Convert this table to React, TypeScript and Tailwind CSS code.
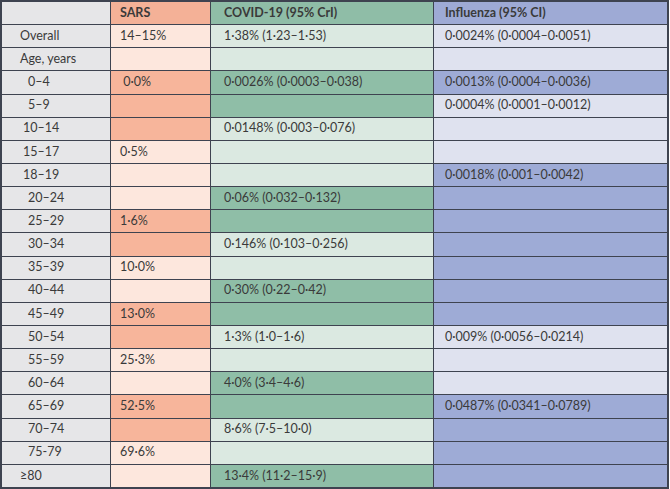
type Row = {
  label: string;
  pad: string;
  sars: string;
  sarsDark: boolean;
  covid: string;
  covidDark: boolean;
  flu: string;
  fluDark: boolean;
};

const rows: Row[] = [
  { label: 'Overall', pad: 'pl-[18px]', sars: '14–15%', sarsDark: false, covid: '1·38% (1·23–1·53)', covidDark: false, flu: '0·0024% (0·0004–0·0051)', fluDark: false },
  { label: 'Age, years', pad: 'pl-[18px]', sars: '', sarsDark: false, covid: '', covidDark: false, flu: '', fluDark: false },
  { label: '0–4', pad: 'pl-[26px]', sars: ' 0·0%', sarsDark: true, covid: '0·0026% (0·0003–0·038)', covidDark: true, flu: '0·0013% (0·0004–0·0036)', fluDark: true },
  { label: '5–9', pad: 'pl-[26px]', sars: '', sarsDark: true, covid: '', covidDark: true, flu: '0·0004% (0·0001–0·0012)', fluDark: false },
  { label: '10–14', pad: 'pl-[21px]', sars: '', sarsDark: true, covid: '0·0148% (0·003–0·076)', covidDark: false, flu: '', fluDark: false },
  { label: '15–17', pad: 'pl-[21px]', sars: '0·5%', sarsDark: false, covid: '', covidDark: false, flu: '', fluDark: false },
  { label: '18–19', pad: 'pl-[21px]', sars: '', sarsDark: false, covid: '', covidDark: false, flu: '0·0018% (0·001–0·0042)', fluDark: true },
  { label: '20–24', pad: 'pl-[26px]', sars: '', sarsDark: false, covid: '0·06% (0·032–0·132)', covidDark: true, flu: '', fluDark: true },
  { label: '25–29', pad: 'pl-[26px]', sars: '1·6%', sarsDark: true, covid: '', covidDark: true, flu: '', fluDark: true },
  { label: '30–34', pad: 'pl-[26px]', sars: '', sarsDark: true, covid: '0·146% (0·103–0·256)', covidDark: false, flu: '', fluDark: true },
  { label: '35–39', pad: 'pl-[26px]', sars: '10·0%', sarsDark: false, covid: '', covidDark: false, flu: '', fluDark: true },
  { label: '40–44', pad: 'pl-[26px]', sars: '', sarsDark: false, covid: '0·30% (0·22–0·42)', covidDark: true, flu: '', fluDark: true },
  { label: '45–49', pad: 'pl-[26px]', sars: '13·0%', sarsDark: true, covid: '', covidDark: true, flu: '', fluDark: true },
  { label: '50–54', pad: 'pl-[26px]', sars: '', sarsDark: true, covid: '1·3% (1·0–1·6)', covidDark: false, flu: '0·009% (0·0056–0·0214)', fluDark: false },
  { label: '55–59', pad: 'pl-[26px]', sars: '25·3%', sarsDark: false, covid: '', covidDark: false, flu: '', fluDark: false },
  { label: '60–64', pad: 'pl-[26px]', sars: '', sarsDark: false, covid: '4·0% (3·4–4·6)', covidDark: true, flu: '', fluDark: false },
  { label: '65–69', pad: 'pl-[26px]', sars: '52·5%', sarsDark: true, covid: '', covidDark: true, flu: '0·0487% (0·0341–0·0789)', fluDark: true },
  { label: '70–74', pad: 'pl-[26px]', sars: '', sarsDark: true, covid: '8·6% (7·5–10·0)', covidDark: false, flu: '', fluDark: true },
  { label: '75-79', pad: 'pl-[26px]', sars: '69·6%', sarsDark: false, covid: '', covidDark: false, flu: '', fluDark: true },
  { label: '≥80', pad: 'pl-[18px]', sars: '', sarsDark: false, covid: '13·4% (11·2–15·9)', covidDark: true, flu: '', fluDark: true },
];

export default function App() {
  return (
    <div className="w-[670px] h-[489px] bg-white font-['Lato',sans-serif] text-[12.5px] text-[#3a3a3a]">
      <div className="w-[669px] h-[489px] flex flex-col border-2 border-[#3e4350]">
        {/* header */}
        <div className="flex-1 flex border-b border-[#3e4350] font-bold">
          <div className="w-[109px] bg-[#e6e6e8] border-r border-[#3e4350]" />
          <div className="w-[100px] bg-[#f4b197] border-r border-[#3e4350] flex items-center pl-[9px]">SARS</div>
          <div className="w-[223px] bg-[#8fbda7] border-r border-[#3e4350] flex items-center pl-[13px]">
            COVID-19 (95% CrI)
          </div>
          <div className="flex-1 bg-[#9eaad5] flex items-center pl-[11px]">Influenza (95% CI)</div>
        </div>
        {rows.map((r, i) => (
          <div
            key={r.label}
            className={`flex-1 flex ${i === rows.length - 1 ? '' : 'border-b border-[#3e4350]'}`}
          >
            <div className={`w-[109px] bg-[#e6e6e8] border-r border-[#3e4350] flex items-center ${r.pad}`}>
              {r.label}
            </div>
            <div
              className={`w-[100px] border-r border-[#3e4350] flex items-center pl-[9px] whitespace-pre ${
                r.sarsDark ? 'bg-[#f7b59b]' : 'bg-[#fde7dd]'
              }`}
            >
              {r.sars}
            </div>
            <div
              className={`w-[223px] border-r border-[#3e4350] flex items-center pl-[13px] ${
                r.covidDark ? 'bg-[#8fbea7]' : 'bg-[#dbe9e1]'
              }`}
            >
              {r.covid}
            </div>
            <div className={`flex-1 flex items-center pl-[11px] ${r.fluDark ? 'bg-[#9eabd6]' : 'bg-[#dfe2ef]'}`}>
              {r.flu}
            </div>
          </div>
        ))}
      </div>
    </div>
  );
}
